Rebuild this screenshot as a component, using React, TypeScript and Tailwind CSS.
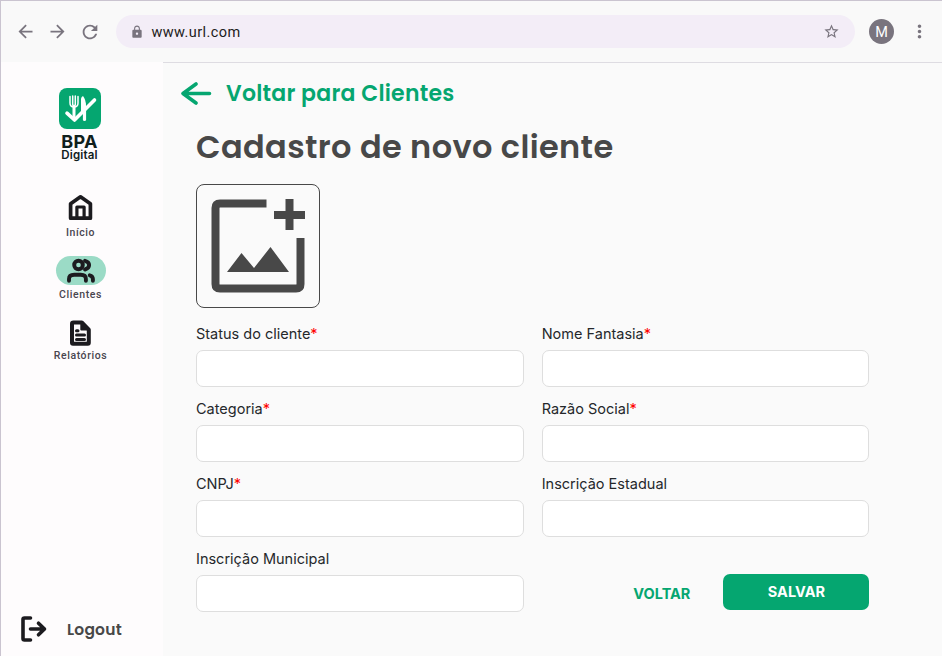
import React from "react";
import { MdArrowBack, MdArrowForward, MdRefresh, MdLock, MdStarBorder, MdMoreVert } from "react-icons/md";

function BrowserBar() {
  return (
    <header className="flex h-[61px] shrink-0 items-center bg-[#f9f9f9] pl-[14.4px] text-[#79747e]">
      <MdArrowBack size={21} />
      <MdArrowForward size={21} className="ml-[11px]" />
      <MdRefresh size={22} className="ml-[11px]" />
      <div className="ml-[14.6px] flex h-[33px] w-[739px] items-center rounded-full bg-[#f3edf7] pl-[14px] pr-[15px]">
        <MdLock size={14} />
        <span className="ml-[7.5px] flex-1 pt-[2px] font-[Roboto,sans-serif] text-[14.5px] tracking-[0.42px] text-[#1d1b20]">www.url.com</span>
        <MdStarBorder size={17} />
      </div>
      <div className="ml-[14px] flex size-[25px] items-center justify-center rounded-full bg-[#79747e] pt-[2px] font-[Roboto,sans-serif] text-[14.5px] text-white">M</div>
      <MdMoreVert size={21} className="ml-[15px]" />
    </header>
  );
}

function Brand() {
  return (
    <div className="flex h-[102px] flex-col items-center pr-[5px] pt-[26px] font-[Inter,sans-serif] text-[#10201c]">
      <svg width="42" height="41" viewBox="0 0 42 41" className="shrink-0">
        <rect width="42" height="41" rx="8" fill="#05a670" />
        <g fill="none" stroke="#fff" strokeLinecap="round" strokeLinejoin="round">
          <path d="M11 8.500v6.500q0 4 4 4t4-4V8.500M13.700 8V17M16.300 8V17" strokeWidth="1.500" />
          <path d="M15 18v13" strokeWidth="3" />
          <path d="M8 25.200 15.500 32 35.500 12" strokeWidth="3.600" />
          <path d="M25.500 22v9.500" strokeWidth="3.200" />
        </g>
        <path d="M22 26V10.500q.5-1.800 2-2.500 3 4 3 9.500v5Z" fill="#fff" />
      </svg>
      <strong className="mt-[6px] text-[18px] font-bold leading-[14px] tracking-[0.4px]">BPA</strong>
      <span className="text-[11.500px] font-semibold leading-[12px] tracking-[0.2px]">Digital</span>
    </div>
  );
}

function HomeIcon() {
  return (
    <svg width="25" height="27" viewBox="0 0 25 27" fill="none" stroke="#1c1b1f" strokeWidth="3.700" strokeLinejoin="round" className="relative -top-[1.5px]">
      <path d="M2.600 9.800 12.500 2.800 22.400 9.800V24.200H2.600Z" />
      <path d="M8.900 24V13h7.200v11" strokeWidth="3.200" />
    </svg>
  );
}

function PeopleIcon() {
  return (
    <svg width="30" height="26" viewBox="0 0 30 26" fill="none" stroke="#1c1b1f" strokeWidth="3.900" strokeLinecap="round">
      <circle cx="12.500" cy="7" r="4.300" />
      <path d="M19 2.800q4.100 1 4.100 4.300t-4.100 4.400" />
      <path d="M3 22.700v-1.800q0-4.100 5.200-4.100h6.500q5.200 0 5.200 4.100v1.800M23.700 17.300q3.200.8 3.200 3.800v1.600" />
    </svg>
  );
}

function ReportIcon() {
  return (
    <svg width="23" height="27" viewBox="0 0 23 27" fill="none" stroke="#1c1b1f">
      <path d="M4.500 3.500h8.300l7 7.200v13q0 1-1 1H4q-1 0-1-1v-19Q3 3.500 4.500 3.500Z" strokeWidth="4" strokeLinejoin="round" />
      <path d="M12.300 3v7.500h7.500Z" fill="#1c1b1f" strokeWidth="2" strokeLinejoin="round" />
      <path d="M7.500 11.700H9M7.500 16.100h8M7.500 20.500h8" strokeWidth="3" strokeLinecap="round" />
    </svg>
  );
}

function NavItem({ label, active = false, children }: { label: string; active?: boolean; children: React.ReactNode }) {
  return (
    <a className="flex h-[61.5px] flex-col items-center font-[Roboto,sans-serif] text-[10.5px] font-medium tracking-[0.57px] text-[#49454f]">
      <span className={active ? "flex h-[29px] w-[50px] items-center justify-center rounded-full bg-[#9bdbc6]" : "flex h-[29px] w-[50px] items-center justify-center"}>{children}</span>
      <span className="mt-[2.5px] leading-[13px]">{label}</span>
    </a>
  );
}

function Sidebar() {
  return (
    <aside className="flex w-[162px] shrink-0 flex-col bg-[#fefcfd]">
      <Brand />
      <nav className="mt-[30.500px] pr-[3px]">
        <NavItem label="Início"><HomeIcon /></NavItem>
        <NavItem label="Clientes" active><PeopleIcon /></NavItem>
        <NavItem label="Relatórios"><ReportIcon /></NavItem>
      </nav>
      <button className="mb-[12px] mt-auto flex h-[30px] items-center pl-[19px] text-left">
        <svg width="28" height="28" viewBox="0 0 28 28" fill="none" stroke="#1c1b1f" strokeWidth="3.600" strokeLinecap="round" strokeLinejoin="round">
          <path d="M10.500 3H4.500Q3 3 3 4.500v19Q3 25 4.500 25h6M10.500 14H24M18.500 8.200 24.500 14l-6 5.800" />
        </svg>
        <span className="ml-[19px] pt-px font-[Poppins,Inter,sans-serif] text-[15.5px] font-semibold tracking-[0.2px] text-[#484848]">Logout</span>
      </button>
    </aside>
  );
}

function Field({ label, required = false }: { label: string; required?: boolean }) {
  return (
    <label className="block h-[74.800px]">
      <span className="block h-[25px] text-[14.500px] leading-[18px]">
        {label}
        {required && <span className="text-[#ff0000]">*</span>}
      </span>
      <input className="block h-[37px] w-full rounded-[7px] border border-[#dedede] bg-white px-3 outline-none" />
    </label>
  );
}

function ClientForm() {
  return (
    <form className="ml-[33px] mt-[17.200px] grid w-[673.400px] grid-cols-2 gap-x-[18px] font-[Inter,sans-serif] text-[#25282b]">
      <Field label="Status do cliente" required />
      <Field label="Nome Fantasia" required />
      <Field label="Categoria" required />
      <Field label="Razão Social" required />
      <Field label="CNPJ" required />
      <Field label="Inscrição Estadual" />
      <Field label="Inscrição Municipal" />
      <div className="flex h-[61.700px] items-end justify-end text-[14.500px] font-bold">
        <button type="button" className="mr-[33px] h-[34px] text-[#05a670]">VOLTAR</button>
        <button type="button" className="mb-[1px] h-[36px] w-[146px] rounded-[7px] bg-[#05a670] text-white">SALVAR</button>
      </div>
    </form>
  );
}

export default function App() {
  return (
    <div className="flex h-[656px] w-[942px] flex-col overflow-hidden border-l border-t border-[#cac4d0] bg-[#fafafa]">
      <BrowserBar />
      <div className="flex min-h-0 flex-1">
        <Sidebar />
        <main className="min-w-0 flex-1 border-t border-[#dedce2]">
          <a className="flex h-[60px] items-center pl-[17px] text-[#05a670]">
            <svg width="32" height="24" viewBox="0 0 32 24" fill="none" stroke="currentColor" strokeWidth="3.600" strokeLinecap="round" strokeLinejoin="round">
              <path d="M29.500 12.500H3M16 3 3 12.500l13 9.500" />
            </svg>
            <span className="ml-[14px] font-[Poppins,Inter,sans-serif] text-[22px] font-semibold tracking-[0.250px]">Voltar para Clientes</span>
          </a>
          <h1 className="ml-[33px] h-[61px] font-[Poppins,Inter,sans-serif] text-[32px] font-semibold leading-[48px] tracking-[0.380px] text-[#484848]">Cadastro de novo cliente</h1>
          <button className="ml-[33px] flex h-[124px] w-[124px] items-center justify-center rounded-[8px] border border-[#484848]">
            <svg width="94" height="94" viewBox="0 0 94 94" fill="none" stroke="#484848" className="relative -left-[0.5px] -top-[0.5px]">
              <path d="M55.500 4.500H9Q4.500 4.500 4.500 9v76q0 4.500 4.500 4.500h76q4.500 0 4.500-4.500V39" strokeWidth="8" />
              <path d="M63 16h31M78.500 0v31" strokeWidth="8" />
              <path d="m16 73 14.500-19L43 69l16.500-21L78 73Z" fill="#484848" stroke="none" />
            </svg>
          </button>
          <ClientForm />
        </main>
      </div>
    </div>
  );
}
